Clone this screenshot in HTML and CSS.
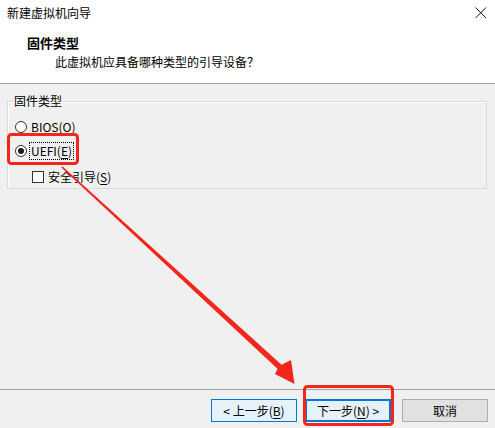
FILE: index.html
```html
<!DOCTYPE html>
<html lang="zh-CN">

<head>
    <meta charset="UTF-8">
    <meta name="viewport" content="width=device-width, initial-scale=1.0">
    <title>新建虚拟机向导</title>
    <link rel="stylesheet" href="styles.css">
</head>

<body>
    <div id="wizard">
        <div class="titleBar">
            <span class="titleText">新建虚拟机向导</span>
            <svg class="closeIcon" width="12" height="12" viewBox="0 0 12 12">
                <path d="M0.5 0.5L11 11M11 0.5L0.5 11" stroke="#111" stroke-width="1" fill="none" />
            </svg>
        </div>

        <div class="header">
            <h1>固件类型</h1>
            <p>此虚拟机应具备哪种类型的引导设备？</p>
        </div>

        <div class="content">
            <fieldset>
                <legend>固件类型</legend>
                <div class="option firstOption">
                    <span class="radio"></span>
                    <span class="optionText">BIOS(<u>O</u>)</span>
                </div>
                <div class="option">
                    <span class="radio checked"></span>
                    <span class="optionText focused">UEFI(<u>E</u>)</span>
                </div>
                <div class="option subOption">
                    <span class="checkbox"></span>
                    <span class="optionText">安全引导(<u>S</u>)</span>
                </div>
            </fieldset>
        </div>

        <div class="footer">
            <button class="btn backBtn">&lt; 上一步(<u>B</u>)</button>
            <button class="btn nextBtn">下一步(<u>N</u>) &gt;</button>
            <button class="btn cancelBtn">取消</button>
        </div>

        <!-- red annotation marks drawn over the dialog -->
        <svg class="marks" width="495" height="428" viewBox="0 0 495 428">
            <rect x="8.5" y="134.5" width="69" height="29" rx="3" fill="none" stroke="#f2261b" stroke-width="3" />
            <rect x="304.5" y="386.5" width="88" height="38" rx="3" fill="none" stroke="#f2261b" stroke-width="3" />
            <polygon fill="#f2261b"
                points="62.6,166.4 281.5,364.8 291,360 294.5,384 275,374 277.5,368.8 61.4,167.6" />
        </svg>
    </div>
</body>

</html>
```

FILE: styles.css
```css
html {
    margin: 0;
    font-family: "Noto Sans CJK SC", "Noto Sans", sans-serif;
}

body {
    margin: 0;
    width: 495px;
    height: 428px;
    overflow: hidden;
}

#wizard {
    position: relative;
    display: flex;
    flex-direction: column;
    width: 495px;
    height: 428px;
    background-color: #ffffff;
    color: #000000;
    font-size: 12px;
}

.titleBar {
    display: flex;
    align-items: center;
    justify-content: space-between;
    height: 26px;
    padding: 0 8px 0 7px;
    box-sizing: border-box;
}

.titleText {
    line-height: 16px;
}

.closeIcon {
    display: block;
    margin-top: -1px;
}

.header {
    height: 58px;
    box-sizing: border-box;
    padding-top: 8px;
    border-bottom: solid 1px #a0a0a0;
    background-color: #ffffff;
}

.header h1 {
    margin: 0;
    padding-left: 27px;
    font-size: 13px;
    font-weight: 700;
    line-height: 18px;
}

.header p {
    margin: 1px 0 0 0;
    padding-left: 55px;
    font-size: 12px;
    line-height: 18px;
}

.content {
    flex: 1;
    background-color: #f0f0f0;
    overflow: hidden;
}

fieldset {
    margin: 9px 8px 0 7px;
    padding: 0 0 1px 5px;
    border: solid 1px #dcdcdc;
    box-shadow: inset 1px 1px 0 #ffffff;
}

legend {
    padding: 0 1px;
    font-size: 12px;
    line-height: 16px;
}

.option {
    display: flex;
    align-items: center;
    height: 20px;
    margin-top: 4px;
    margin-left: 2px;
    line-height: 16px;
}

.firstOption {
    margin-top: 8px;
}

.subOption {
    margin-top: 6px;
    margin-left: 19px;
}

.radio {
    position: relative;
    width: 12px;
    height: 12px;
    box-sizing: border-box;
    border: solid 1px #333333;
    border-radius: 50%;
    background-color: #ffffff;
    margin-right: 4px;
}

.radio.checked::after {
    content: "";
    position: absolute;
    left: 2px;
    top: 2px;
    width: 6px;
    height: 6px;
    border-radius: 50%;
    background-color: #1a1a1a;
}

.checkbox {
    width: 12px;
    height: 12px;
    box-sizing: border-box;
    border: solid 1px #333333;
    background-color: #ffffff;
    margin-right: 4px;
}

.optionText u {
    text-underline-offset: 2px;
}

.focused {
    outline: dotted 1px #000000;
    padding: 0 1px;
    margin-left: -1px;
}

.footer {
    display: flex;
    justify-content: flex-end;
    height: 39px;
    box-sizing: border-box;
    padding: 9px 7px 0 0;
    border-top: solid 1px #a0a0a0;
    background-color: #f0f0f0;
}

.btn {
    width: 86px;
    height: 23px;
    padding: 0;
    box-sizing: border-box;
    font-family: "Noto Sans CJK SC", "Noto Sans", sans-serif;
    font-size: 12px;
    color: #000000;
    line-height: 16px;
}

.btn u {
    text-underline-offset: 2px;
}

.backBtn {
    margin-right: 8px;
    border: solid 1px #0078d7;
    background-color: #e5f1fb;
}

.nextBtn {
    margin-right: 11px;
    border: solid 2px #0078d7;
    background-color: #e5f1fb;
}

.cancelBtn {
    border: solid 1px #adadad;
    background-color: #e1e1e1;
}

.marks {
    position: absolute;
    left: 0;
    top: 0;
    pointer-events: none;
}
```
